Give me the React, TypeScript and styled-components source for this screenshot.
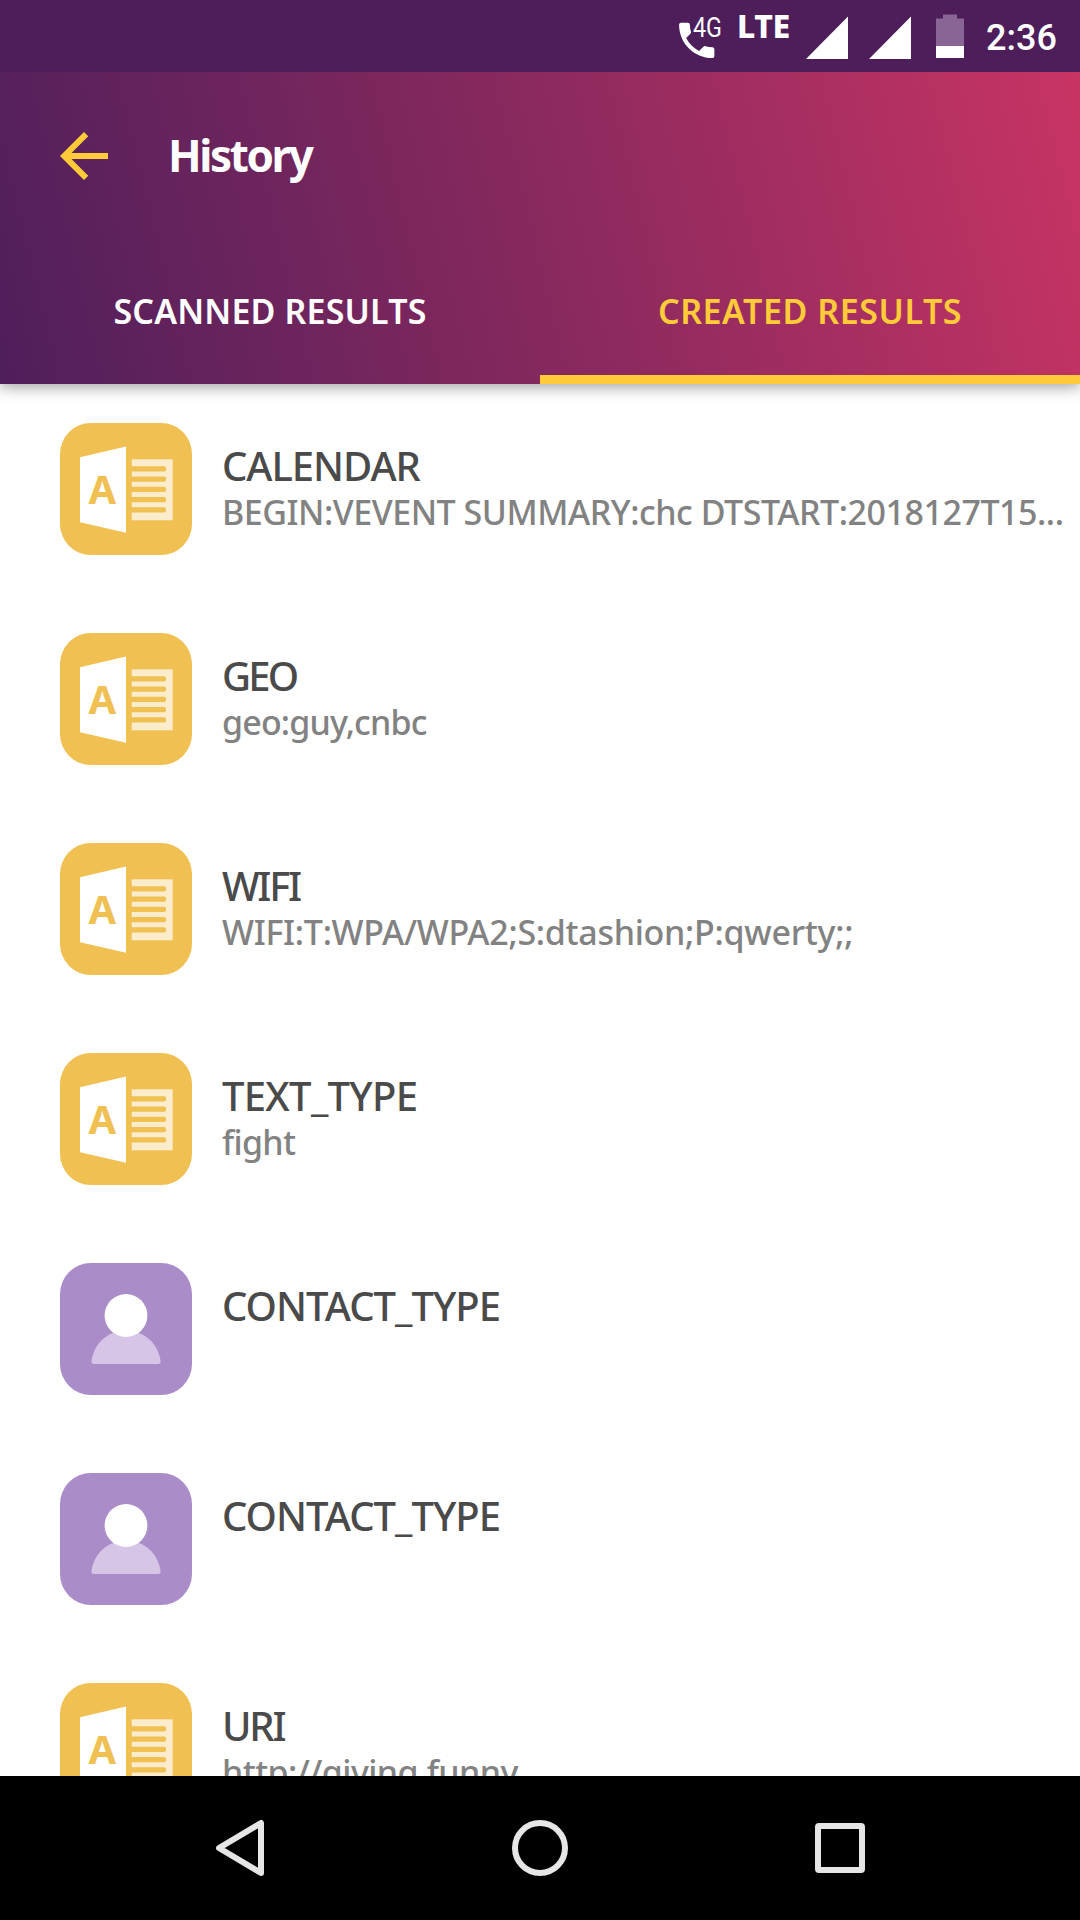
import React from 'react';
import styled, { createGlobalStyle } from 'styled-components';

const GlobalStyle = createGlobalStyle`
  *, *::before, *::after { box-sizing: border-box; }
  body { margin: 0; background: #fff; }
`;

const Screen = styled.div`
  display: flex;
  flex-direction: column;
  width: 1080px;
  height: 1920px;
  overflow: hidden;
  background: #fff;
  font-family: 'Noto Sans', 'Open Sans', sans-serif;
`;

const StatusBar = styled.div`
  display: flex;
  flex: none;
  align-items: flex-start;
  justify-content: flex-end;
  z-index: 2;
  height: 72px;
  padding-right: 24px;
  background: #4d1e5a;
  color: #fff;
`;

const CallIcon = styled.svg`
  width: 48px;
  height: 72px;
  overflow: visible;
`;

const NetworkLabel = styled.span`
  width: 56px;
  margin: 4px 13px 0 14px;
  font-size: 32px;
  font-weight: 800;
  line-height: 44px;
  letter-spacing: -0.4px;
  white-space: nowrap;
`;

const SignalIcon = styled.svg`
  width: 42px;
  height: 72px;
  margin-right: 21px;
`;

const BatteryIcon = styled.svg`
  width: 28px;
  height: 72px;
  margin: 0 22px 0 4px;
`;

const Clock = styled.span`
  width: 70px;
  font-family: Roboto, sans-serif;
  font-size: 36px;
  font-weight: 500;
  line-height: 76px;
  white-space: nowrap;
`;

const Header = styled.header`
  display: flex;
  flex: none;
  flex-direction: column;
  z-index: 1;
  height: 312px;
  background: linear-gradient(76.5deg, #4f1f5b 0%, #88295e 50%, #c93464 101%);
  box-shadow: 0 3px 14px rgba(0, 0, 0, 0.38);
`;

const Toolbar = styled.div`
  display: flex;
  align-items: center;
  height: 168px;
  padding-left: 48px;
`;

const BackIcon = styled.svg`
  width: 72px;
  height: 72px;
  fill: #ffcb38;
`;

const Title = styled.h1`
  margin: -3px 0 0 48px;
  color: #fff;
  font-size: 44px;
  font-weight: 700;
  line-height: 64px;
  letter-spacing: -2.4px;
`;

const Tabs = styled.nav`
  display: grid;
  grid-template-columns: 1fr 1fr;
  height: 144px;
`;

const Tab = styled.div<{ $active?: boolean; $tracking: number }>`
  display: flex;
  align-items: center;
  justify-content: center;
  padding-top: 7px;
  border-bottom: 9px solid ${(p) => (p.$active ? '#ffcb38' : 'transparent')};
  color: ${(p) => (p.$active ? '#ffcb38' : '#fff')};
  font-size: 34px;
  font-weight: 600;
  letter-spacing: ${(p) => p.$tracking}px;
  white-space: nowrap;
`;

const List = styled.main`
  display: flex;
  flex: 1;
  flex-direction: column;
  min-height: 0;
  overflow: hidden;
`;

const Row = styled.div`
  display: flex;
  flex: none;
  align-items: flex-start;
  gap: 30px;
  height: 210px;
  padding: 39px 0 0 60px;
`;

const TypeIcon = styled.svg`
  flex: none;
  width: 132px;
  height: 132px;
`;

const Letter = styled.text`
  font-family: 'Noto Sans', sans-serif;
  font-size: 40px;
  font-weight: 700;
`;

const Texts = styled.div`
  display: flex;
  flex-direction: column;
  padding-top: 20px;
`;

const Name = styled.span<{ $tracking: number }>`
  color: #4a4a4a;
  font-size: 40px;
  font-weight: 500;
  line-height: 46px;
  letter-spacing: ${(p) => p.$tracking}px;
  white-space: nowrap;
`;

const Detail = styled.span<{ $tracking: number }>`
  color: #828282;
  font-size: 34px;
  font-weight: 500;
  line-height: 46px;
  letter-spacing: ${(p) => p.$tracking}px;
  white-space: nowrap;
`;

const NavBar = styled.footer`
  display: flex;
  flex: none;
  align-items: center;
  justify-content: space-between;
  height: 144px;
  padding: 0 204px;
  background: #000;
`;

const NavIcon = styled.svg`
  width: 72px;
  height: 72px;
  fill: none;
  stroke: #e6e6e6;
  stroke-width: 6;
  stroke-linejoin: round;
`;

const DocumentIcon = () => (
  <TypeIcon viewBox="0 0 132 132">
    <rect width="132" height="132" rx="31" fill="#f0c052" />
    <path d="M20 34.3 66 23.6V109.8L20 99.2Z" fill="#fff" />
    <Letter x="28.6" y="80.8" fill="#f0c052">A</Letter>
    <rect x="71.7" y="36.3" width="41" height="61" fill="#fbeccb" />
    {[43.3, 53.6, 63.8, 74, 84.2].map((y) => (
      <path key={y} d={`M71 ${y}H104a2 2 0 0 1 2 2v1.2a2 2 0 0 1-2 2H71Z`} fill="#f0c052" />
    ))}
  </TypeIcon>
);

const ContactIcon = () => (
  <TypeIcon viewBox="0 0 132 132">
    <rect width="132" height="132" rx="31" fill="#aa8cc8" />
    <path d="M31.4 98.5C33.5 81 47.5 67.5 66 67.5S98.5 81 100.6 98.5Q100.8 100.9 98.6 100.9H33.4Q31.2 100.9 31.4 98.5Z" fill="#d7c5e7" />
    <circle cx="66" cy="52.5" r="21.4" fill="#fff" />
  </TypeIcon>
);

const Signal = () => (
  <SignalIcon viewBox="0 0 42 72">
    <path d="M42 16.5V59H0Z" fill="#fff" />
  </SignalIcon>
);

type Entry = {
  kind: 'document' | 'contact';
  name: string;
  nameTracking: number;
  detail?: string;
  detailTracking?: number;
};

const entries: Entry[] = [
  { kind: 'document', name: 'CALENDAR', nameTracking: -1.05, detail: 'BEGIN:VEVENT SUMMARY:chc DTSTART:2018127T15...', detailTracking: -0.46 },
  { kind: 'document', name: 'GEO', nameTracking: -2.8, detail: 'geo:guy,cnbc', detailTracking: -0.85 },
  { kind: 'document', name: 'WIFI', nameTracking: -2.3, detail: 'WIFI:T:WPA/WPA2;S:dtashion;P:qwerty;;', detailTracking: -0.29 },
  { kind: 'document', name: 'TEXT_TYPE', nameTracking: -0.7, detail: 'fight', detailTracking: -0.7 },
  { kind: 'contact', name: 'CONTACT_TYPE', nameTracking: -0.98 },
  { kind: 'contact', name: 'CONTACT_TYPE', nameTracking: -0.98 },
  { kind: 'document', name: 'URI', nameTracking: -2.2, detail: 'http://giving.funny', detailTracking: -0.58 },
];

export default function App() {
  return (
    <Screen>
      <GlobalStyle />
      <StatusBar>
        <CallIcon viewBox="0 0 48 72">
          <path
            transform="translate(-1.8 16.9) scale(1.96)"
            d="M6.62 10.79c1.44 2.83 3.76 5.14 6.59 6.59l2.2-2.2c.27-.27.67-.36 1.02-.24 1.12.37 2.33.57 3.57.57.55 0 1 .45 1 1V20c0 .55-.45 1-1 1-9.39 0-17-7.61-17-17 0-.55.45-1 1-1h3.5c.55 0 1 .45 1 1 0 1.25.2 2.45.57 3.57.11.35.03.74-.25 1.02l-2.2 2.2z"
            fill="#fff"
          />
          <text x="18" y="36.5" textLength="29" lengthAdjust="spacingAndGlyphs" fill="#fff" fontFamily="Roboto, sans-serif" fontSize="27">4G</text>
        </CallIcon>
        <NetworkLabel>LTE</NetworkLabel>
        <Signal />
        <Signal />
        <BatteryIcon viewBox="0 0 28 72">
          <path d="M7 14.5h14v4h7V46H0V18.5h7Z" fill="#886594" />
          <rect y="46" width="28" height="12" fill="#fff" />
        </BatteryIcon>
        <Clock>2:36</Clock>
      </StatusBar>
      <Header>
        <Toolbar>
          <BackIcon viewBox="0 0 24 24">
            <path d="M20 11H7.83l5.59-5.59L12 4l-8 8 8 8 1.41-1.41L7.83 13H20v-2z" />
          </BackIcon>
          <Title>History</Title>
        </Toolbar>
        <Tabs>
          <Tab $tracking={0.15}>SCANNED RESULTS</Tab>
          <Tab $active $tracking={0.55}>CREATED RESULTS</Tab>
        </Tabs>
      </Header>
      <List>
        {entries.map((e, i) => (
          <Row key={i}>
            {e.kind === 'contact' ? <ContactIcon /> : <DocumentIcon />}
            <Texts>
              <Name $tracking={e.nameTracking}>{e.name}</Name>
              {e.detail && <Detail $tracking={e.detailTracking ?? 0}>{e.detail}</Detail>}
            </Texts>
          </Row>
        ))}
      </List>
      <NavBar>
        <NavIcon viewBox="0 0 72 72">
          <path d="M57 11V61L15 36Z" />
        </NavIcon>
        <NavIcon viewBox="0 0 72 72">
          <circle cx="36" cy="36" r="25" />
        </NavIcon>
        <NavIcon viewBox="0 0 72 72">
          <rect x="14" y="14" width="44" height="44" rx="1" />
        </NavIcon>
      </NavBar>
    </Screen>
  );
}
